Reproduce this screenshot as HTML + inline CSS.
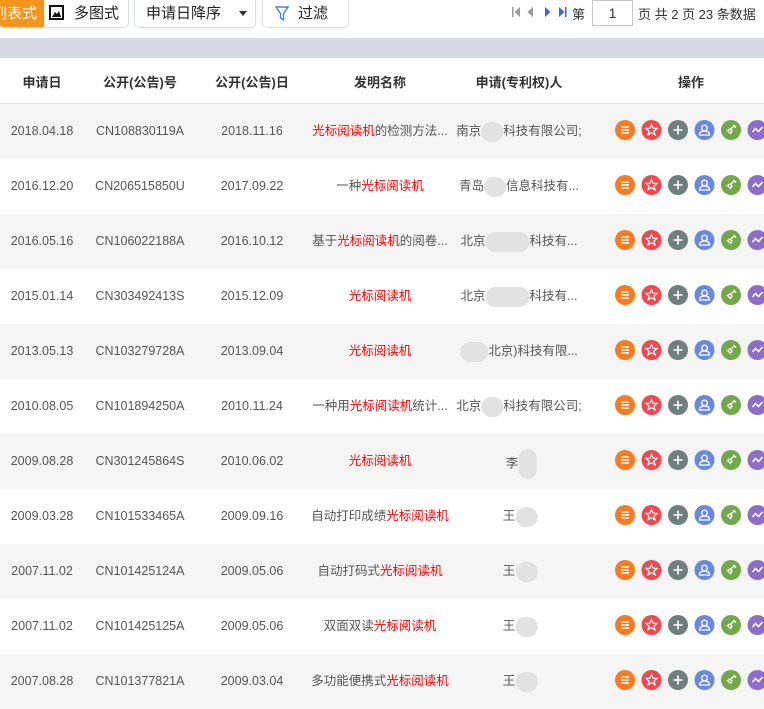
<!DOCTYPE html>
<html><head><meta charset="utf-8"><style>
*{margin:0;padding:0;box-sizing:border-box}
body{width:764px;height:683px;overflow:hidden;background:#fff;font-family:"Liberation Sans","Noto Sans CJK SC",sans-serif;position:relative;color:#555}
.tb{position:absolute;top:0;height:28px;font-size:15px;color:#222;line-height:27px;border:1px solid #dcdfe6;border-top:none;border-radius:0 0 5px 5px;background:#fff}
.band{position:absolute;top:38px;left:0;width:764px;height:20px;background:#d5dae4}
.hd{position:absolute;top:58px;left:0;width:764px;height:46px;border-bottom:1px solid #e3e3e3;font-size:13px;font-weight:bold;color:#333}
.hd span,.r span{position:absolute;transform:translateX(-50%);white-space:nowrap}
.hd span{top:14px}
.r{position:absolute;left:0;width:764px;height:55px;font-size:12.5px}
.r.g{background:#f5f5f5}
.r span{top:19px;line-height:16px;height:16px}
.red{color:#f00}
.b{display:inline-block;width:22px;height:20px;border-radius:10px;background:#e2e2e2;vertical-align:middle;margin:-4px 0}
</style></head><body>
<div class="tb" style="left:-1px;width:130px;border-left:none;padding:0;overflow:hidden"><div style="position:absolute;left:0;top:0;width:45px;height:27px;background:#f7941d;color:#fff;overflow:hidden"><span style="position:absolute;left:-7px;white-space:nowrap">列表式</span></div>
<svg style="position:absolute;left:50px;top:5px" width="15" height="15" viewBox="0 0 15 15"><rect x="1" y="1" width="13" height="13" fill="none" stroke="#111" stroke-width="2"/><path d="M3 12 L6 7 L8 9 L10 6 L12 12Z" fill="#111"/></svg>
<span style="position:absolute;left:75px">多图式</span></div>
<div class="tb" style="left:134px;width:122px;padding-left:11px">申请日降序<span style="position:absolute;right:8px;top:11px;width:0;height:0;border:4px solid transparent;border-top:5px solid #333"></span></div>
<div class="tb" style="left:262px;width:87px;padding-left:35px"><svg style="position:absolute;left:12px;top:6px" width="14" height="16" viewBox="0 0 14 16"><path d="M1 1 H13 L8.5 7.5 V14 L5.5 12 V7.5Z" fill="none" stroke="#4a7fd6" stroke-width="1.4"/></svg>过滤</div>
<div style="position:absolute;left:511px;top:4px;font-size:13px;color:#333">
<svg width="60" height="14" viewBox="0 0 60 14" style="position:absolute;left:0;top:1px"><rect x="1" y="2" width="1.5" height="10" fill="#999"/><path d="M9 2 L3.5 7 L9 12Z" fill="#999"/><path d="M22 2 L16.5 7 L22 12Z" fill="#999"/><path d="M34 2 L39.5 7 L34 12Z" fill="#2f6bd8"/><path d="M48 2 L53.5 7 L48 12Z" fill="#2f6bd8"/><rect x="54" y="2" width="1.5" height="10" fill="#2f6bd8"/></svg>
<span style="position:absolute;left:61px;top:0">第</span>
<div style="position:absolute;left:81px;top:-4px;width:41px;height:26px;border:1px solid #c8c8c8;text-align:center;line-height:25px;font-size:14px">1</div>
<span style="position:absolute;left:127px;top:0;white-space:nowrap">页 共 2 页 23 条数据</span></div>
<div class="band"></div>
<div class="hd"><span style="left:42px">申请日</span><span style="left:140px">公开(公告)号</span><span style="left:252px">公开(公告)日</span><span style="left:380px">发明名称</span><span style="left:519px">申请(专利权)人</span><span style="left:691px">操作</span></div>

<div class="r g" style="top:104px"><span style="left:42px">2018.04.18</span><span style="left:140px">CN108830119A</span><span style="left:252px">2018.11.16</span><span style="left:380px"><i class="red" style="font-style:normal">光标阅读机</i>的检测方法...</span><span style="left:519px">南京<b class="b"></b>科技有限公司;</span></div>
<div class="r" style="top:159px"><span style="left:42px">2016.12.20</span><span style="left:140px">CN206515850U</span><span style="left:252px">2017.09.22</span><span style="left:380px">一种<i class="red" style="font-style:normal">光标阅读机</i></span><span style="left:519px">青岛<b class="b"></b>信息科技有...</span></div>
<div class="r g" style="top:214px"><span style="left:42px">2016.05.16</span><span style="left:140px">CN106022188A</span><span style="left:252px">2016.10.12</span><span style="left:380px">基于<i class="red" style="font-style:normal">光标阅读机</i>的阅卷...</span><span style="left:519px">北京<b class="b" style="width:44px"></b>科技有...</span></div>
<div class="r" style="top:269px"><span style="left:42px">2015.01.14</span><span style="left:140px">CN303492413S</span><span style="left:252px">2015.12.09</span><span style="left:380px" class="red">光标阅读机</span><span style="left:519px">北京<b class="b" style="width:44px"></b>科技有...</span></div>
<div class="r g" style="top:324px"><span style="left:42px">2013.05.13</span><span style="left:140px">CN103279728A</span><span style="left:252px">2013.09.04</span><span style="left:380px" class="red">光标阅读机</span><span style="left:519px"><b class="b" style="width:28px"></b>北京)科技有限...</span></div>
<div class="r" style="top:379px"><span style="left:42px">2010.08.05</span><span style="left:140px">CN101894250A</span><span style="left:252px">2010.11.24</span><span style="left:380px">一种用<i class="red" style="font-style:normal">光标阅读机</i>统计...</span><span style="left:519px">北京<b class="b"></b>科技有限公司;</span></div>
<div class="r g" style="top:434px"><span style="left:42px">2009.08.28</span><span style="left:140px">CN301245864S</span><span style="left:252px">2010.06.02</span><span style="left:380px" class="red">光标阅读机</span><span style="left:521px">李<b class="b" style="width:18px;height:30px"></b></span></div>
<div class="r" style="top:489px"><span style="left:42px">2009.03.28</span><span style="left:140px">CN101533465A</span><span style="left:252px">2009.09.16</span><span style="left:380px">自动打印成绩<i class="red" style="font-style:normal">光标阅读机</i></span><span style="left:520px">王<b class="b" style="width:22px"></b></span></div>
<div class="r g" style="top:544px"><span style="left:42px">2007.11.02</span><span style="left:140px">CN101425124A</span><span style="left:252px">2009.05.06</span><span style="left:380px">自动打码式<i class="red" style="font-style:normal">光标阅读机</i></span><span style="left:520px">王<b class="b" style="width:22px"></b></span></div>
<div class="r" style="top:599px"><span style="left:42px">2007.11.02</span><span style="left:140px">CN101425125A</span><span style="left:252px">2009.05.06</span><span style="left:380px">双面双读<i class="red" style="font-style:normal">光标阅读机</i></span><span style="left:520px">王<b class="b" style="width:22px"></b></span></div>
<div class="r g" style="top:654px"><span style="left:42px">2007.08.28</span><span style="left:140px">CN101377821A</span><span style="left:252px">2009.03.04</span><span style="left:380px">多功能便携式<i class="red" style="font-style:normal">光标阅读机</i></span><span style="left:520px">王<b class="b" style="width:22px"></b></span></div>

<svg width="0" height="0" style="position:absolute"><defs>
<g id="icons">
<circle cx="10" cy="10" r="10" fill="#f97a1f"/><path d="M6 7H14M6 10H14M6 13H14" stroke="#fff" stroke-width="1.6"/>
<g transform="translate(26.5 0)"><circle cx="10" cy="10" r="10" fill="#f0484e"/><path d="M10 4.5L11.6 8.2 15.5 8.4 12.5 11 13.5 14.8 10 12.7 6.5 14.8 7.5 11 4.5 8.4 8.4 8.2Z" fill="none" stroke="#fff" stroke-width="1.2"/></g>
<g transform="translate(53 0)"><circle cx="10" cy="10" r="10" fill="#6f7f7c"/><path d="M10 5.5V14.5M5.5 10H14.5" stroke="#fff" stroke-width="1.6"/></g>
<g transform="translate(79.5 0)"><circle cx="10" cy="10" r="10" fill="#6b88e0"/><circle cx="10" cy="8" r="2.8" fill="none" stroke="#fff" stroke-width="1.3"/><path d="M5 15Q5 11 10 11Q15 11 15 15Z" fill="none" stroke="#fff" stroke-width="1.3"/></g>
<g transform="translate(106 0)"><circle cx="10" cy="10" r="10" fill="#72a84a"/><path d="M13.5 5.5L9.5 9.5M6.5 10.5L9.5 13.5L11 11L9 9Z" fill="none" stroke="#fff" stroke-width="1.3"/><path d="M12.5 5L15 7.5" stroke="#fff" stroke-width="1.5"/></g>
<g transform="translate(132.5 0)"><circle cx="10" cy="10" r="10" fill="#8e6dc9"/><path d="M5 12L8 8.5 11 11.5 15 7" fill="none" stroke="#fff" stroke-width="1.6"/></g>
</g></defs></svg>
<svg style="position:absolute;left:615px;top:120px" width="160" height="20"><use href="#icons"/></svg>
<svg style="position:absolute;left:615px;top:175px" width="160" height="20"><use href="#icons"/></svg>
<svg style="position:absolute;left:615px;top:230px" width="160" height="20"><use href="#icons"/></svg>
<svg style="position:absolute;left:615px;top:285px" width="160" height="20"><use href="#icons"/></svg>
<svg style="position:absolute;left:615px;top:340px" width="160" height="20"><use href="#icons"/></svg>
<svg style="position:absolute;left:615px;top:395px" width="160" height="20"><use href="#icons"/></svg>
<svg style="position:absolute;left:615px;top:450px" width="160" height="20"><use href="#icons"/></svg>
<svg style="position:absolute;left:615px;top:505px" width="160" height="20"><use href="#icons"/></svg>
<svg style="position:absolute;left:615px;top:560px" width="160" height="20"><use href="#icons"/></svg>
<svg style="position:absolute;left:615px;top:615px" width="160" height="20"><use href="#icons"/></svg>
<svg style="position:absolute;left:615px;top:670px" width="160" height="20"><use href="#icons"/></svg>
</body></html>
